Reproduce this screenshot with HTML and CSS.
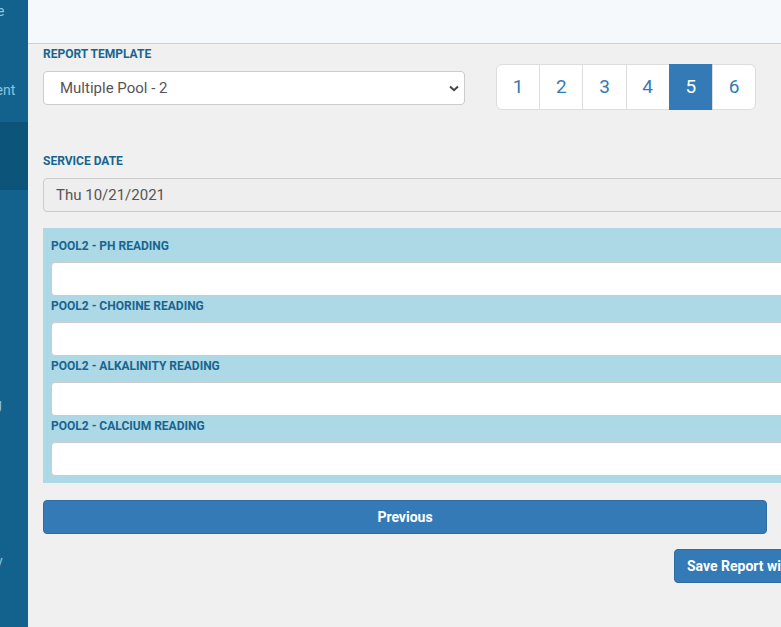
FILE: index.html
```html
<!DOCTYPE html>
<html lang="en">
<head>
    <meta charset="UTF-8">
    <meta name="viewport" content="width=device-width, initial-scale=1.0">
    <title>Service Report</title>
    <link rel="stylesheet" href="styles.css">
</head>
<body>
    <nav class="sidebar">
        <div class="nav-list">
            <div class="nav-item"><span class="nav-label">Employee</span></div>
            <div class="nav-item"><span class="nav-label">Management</span></div>
            <div class="nav-item active"><span class="nav-label">Reports</span></div>
            <div class="nav-item"><span class="nav-label">Clients</span></div>
            <div class="nav-item"><span class="nav-label">Routes</span></div>
            <div class="nav-item"><span class="nav-label">Invoicing</span></div>
            <div class="nav-item"><span class="nav-label">Staff</span></div>
            <div class="nav-item"><span class="nav-label">Inventory</span></div>
        </div>
    </nav>

    <div class="main">
        <header class="topbar"></header>

        <div class="content">
            <div class="template-row">
                <div class="template-col">
                    <label class="field-label" for="template">Report Template</label>
                    <div class="select-wrap">
                        <select id="template" class="form-control select">
                            <option>Multiple Pool - 2</option>
                        </select>
                        <svg class="select-arrow" width="10" height="7" viewBox="0 0 10 7">
                            <path d="M1 1.5 L5 5.2 L9 1.5" fill="none" stroke="#444" stroke-width="2"/>
                        </svg>
                    </div>
                </div>
                <ul class="pagination">
                    <li><a href="#">1</a></li>
                    <li><a href="#">2</a></li>
                    <li><a href="#">3</a></li>
                    <li><a href="#">4</a></li>
                    <li class="active"><a href="#">5</a></li>
                    <li><a href="#">6</a></li>
                </ul>
            </div>

            <label class="field-label date-label" for="service-date">Service Date</label>
            <input type="text" id="service-date" class="form-control" value="Thu 10/21/2021" disabled>

            <div class="readings">
                <label class="reading-label" for="ph">Pool2 - PH Reading</label>
                <input type="text" id="ph" class="form-control reading-input">
                <label class="reading-label" for="chlorine">Pool2 - Chorine Reading</label>
                <input type="text" id="chlorine" class="form-control reading-input">
                <label class="reading-label" for="alkalinity">Pool2 - Alkalinity Reading</label>
                <input type="text" id="alkalinity" class="form-control reading-input">
                <label class="reading-label" for="calcium">Pool2 - Calcium Reading</label>
                <input type="text" id="calcium" class="form-control reading-input">
            </div>

            <button class="btn btn-previous">Previous</button>
            <div class="save-row">
                <button class="btn btn-save">Save Report without Sending</button>
            </div>
        </div>
    </div>
</body>
</html>
```

FILE: styles.css
```css
body {
    margin: 0;
    display: flex;
    height: 627px;
    overflow: hidden;
    background-color: #f0f0f0;
    font-family: Roboto, "Liberation Sans", sans-serif;
}
.sidebar {
    flex: none;
    width: 28px;
    background-color: #13628e;
    overflow: hidden;
}
.nav-list {
    display: flex;
    flex-direction: column;
    gap: 10.5px;
    width: 114px;
    margin-left: -83px;
    margin-top: -35px;
}
.nav-item {
    flex: none;
    height: 68px;
    padding-top: 37px;
    box-sizing: border-box;
    text-align: center;
}
.nav-item.active {
    background-color: #0c5479;
}
.nav-label {
    display: block;
    font-size: 14px;
    line-height: 18px;
    color: #8cc3df;
    white-space: nowrap;
}
.main {
    flex: none;
    width: 920px;
}
.topbar {
    height: 43px;
    background-color: #f6f9fb;
    border-bottom: 1px solid #bdd4e3;
}
.content {
    padding: 0 15px;
}
.template-row {
    display: flex;
    align-items: flex-start;
    gap: 31px;
}
.template-col {
    width: 422px;
    padding-top: 3px;
}
.field-label {
    display: block;
    font-size: 12px;
    line-height: 14px;
    font-weight: bold;
    text-transform: uppercase;
    color: #18658f;
    margin-bottom: 10px;
}
.date-label {
    margin-top: 44px;
}
.form-control {
    display: block;
    width: 100%;
    height: 34px;
    padding: 6px 12px;
    box-sizing: border-box;
    font-family: Roboto, "Liberation Sans", sans-serif;
    font-size: 15px;
    color: #555;
    background-color: #fff;
    border: 1px solid #ccc;
    border-radius: 4px;
    outline: none;
}
.form-control:disabled {
    background-color: #eee;
    color: #555;
    opacity: 1;
}
.select-wrap {
    position: relative;
}
.select {
    appearance: none;
    padding-left: 16px;
}
.select-arrow {
    position: absolute;
    right: 6px;
    top: 14px;
}
.pagination {
    display: flex;
    list-style: none;
    margin: 20px 0 0;
    padding: 0;
}
.pagination li a {
    display: block;
    padding: 10px 15.75px;
    font-size: 19px;
    line-height: 24px;
    color: #337ab7;
    text-decoration: none;
    background-color: #fff;
    border: 1px solid #ddd;
    margin-left: -1px;
}
.pagination li:first-child a {
    margin-left: 0;
    border-radius: 6px 0 0 6px;
}
.pagination li:last-child a {
    border-radius: 0 6px 6px 0;
}
.pagination li.active a {
    color: #fff;
    background-color: #337ab7;
    border-color: #337ab7;
}
.readings {
    margin-top: 16px;
    padding: 8px 8px 7px;
    background-color: #add8e6;
}
.reading-label {
    display: block;
    margin: 3px 0 9px;
    font-size: 12px;
    line-height: 14px;
    font-weight: bold;
    text-transform: uppercase;
    color: #18658f;
}
.reading-input {
    border-radius: 4px;
}
.btn {
    display: block;
    height: 34px;
    padding: 0 12px;
    font-family: Roboto, "Liberation Sans", sans-serif;
    font-size: 14px;
    font-weight: bold;
    color: #fff;
    background-color: #337ab7;
    border: 1px solid #2e6da4;
    border-radius: 4px;
    cursor: pointer;
    white-space: nowrap;
}
.btn-previous {
    width: 724px;
    margin-top: 17px;
}
.save-row {
    margin-top: 15px;
    padding-left: 631px;
}
```
